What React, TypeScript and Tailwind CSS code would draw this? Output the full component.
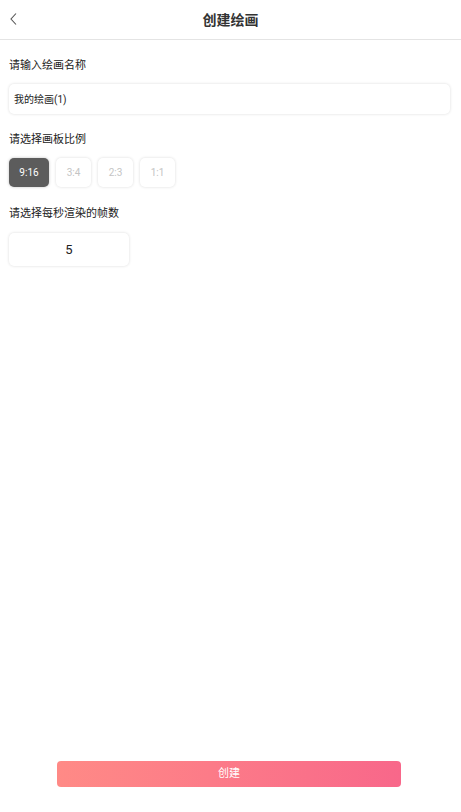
import React from "react";

export default function App() {
  const ratios = ["9:16", "3:4", "2:3", "1:1"];
  const widths = ["w-[40px]", "w-[35px]", "w-[35px]", "w-[35px]"];
  return (
    <div
      className="w-[461px] h-[812px] bg-white flex flex-col text-[#222]"
      style={{ fontFamily: '"Roboto", "Noto Sans CJK SC", sans-serif' }}
    >
      <div className="h-[40px] shrink-0 relative flex items-center justify-center border-b border-[#e4e4e4]">
        <svg
          className="absolute left-[9px] top-[12px]"
          width="10"
          height="14"
          viewBox="0 0 10 14"
          fill="none"
        >
          <path d="M7 1.5 L2 7 L7 12.5" stroke="#555" strokeWidth="1.1" />
        </svg>
        <span className="text-[14px] font-bold text-[#333] leading-none">创建绘画</span>
      </div>

      <div className="flex-1 flex flex-col pl-[9px] pr-[11px]">
        <div className="mt-[19px] text-[11px] leading-[14px]">请输入绘画名称</div>
        <div className="mt-[11px] h-[30px] rounded-[5px] bg-white shadow-[0_0_3px_rgba(0,0,0,0.15)] flex items-center px-[5px] text-[10px]">
          我的绘画(1)
        </div>

        <div className="mt-[19px] text-[11px] leading-[14px]">请选择画板比例</div>
        <div className="mt-[11px] flex gap-[7px]">
          {ratios.map((r, i) => (
            <div
              key={r}
              className={
                "h-[29px] rounded-[5px] flex items-center justify-center text-[10px] " +
                widths[i] +
                " " +
                (i === 0
                  ? "bg-[#5c5c5c] text-white shadow-[0_0_3px_rgba(0,0,0,0.25)]"
                  : "bg-white text-[#c4c4c4] shadow-[0_0_3px_rgba(0,0,0,0.15)]")
              }
            >
              {r}
            </div>
          ))}
        </div>

        <div className="mt-[20px] text-[11px] leading-[14px]">请选择每秒渲染的帧数</div>
        <div className="mt-[12px] w-[120px] h-[33px] rounded-[5px] bg-white shadow-[0_0_3px_rgba(0,0,0,0.15)] flex items-center justify-center text-[13px]">
          5
        </div>
      </div>

      <div className="shrink-0 flex pl-[57px] pb-[25px]">
        <div className="w-[344px] h-[26px] rounded-[4px] bg-gradient-to-r from-[#ff8a86] to-[#f8678a] flex items-center justify-center text-white text-[11px]">
          创建
        </div>
      </div>
    </div>
  );
}
